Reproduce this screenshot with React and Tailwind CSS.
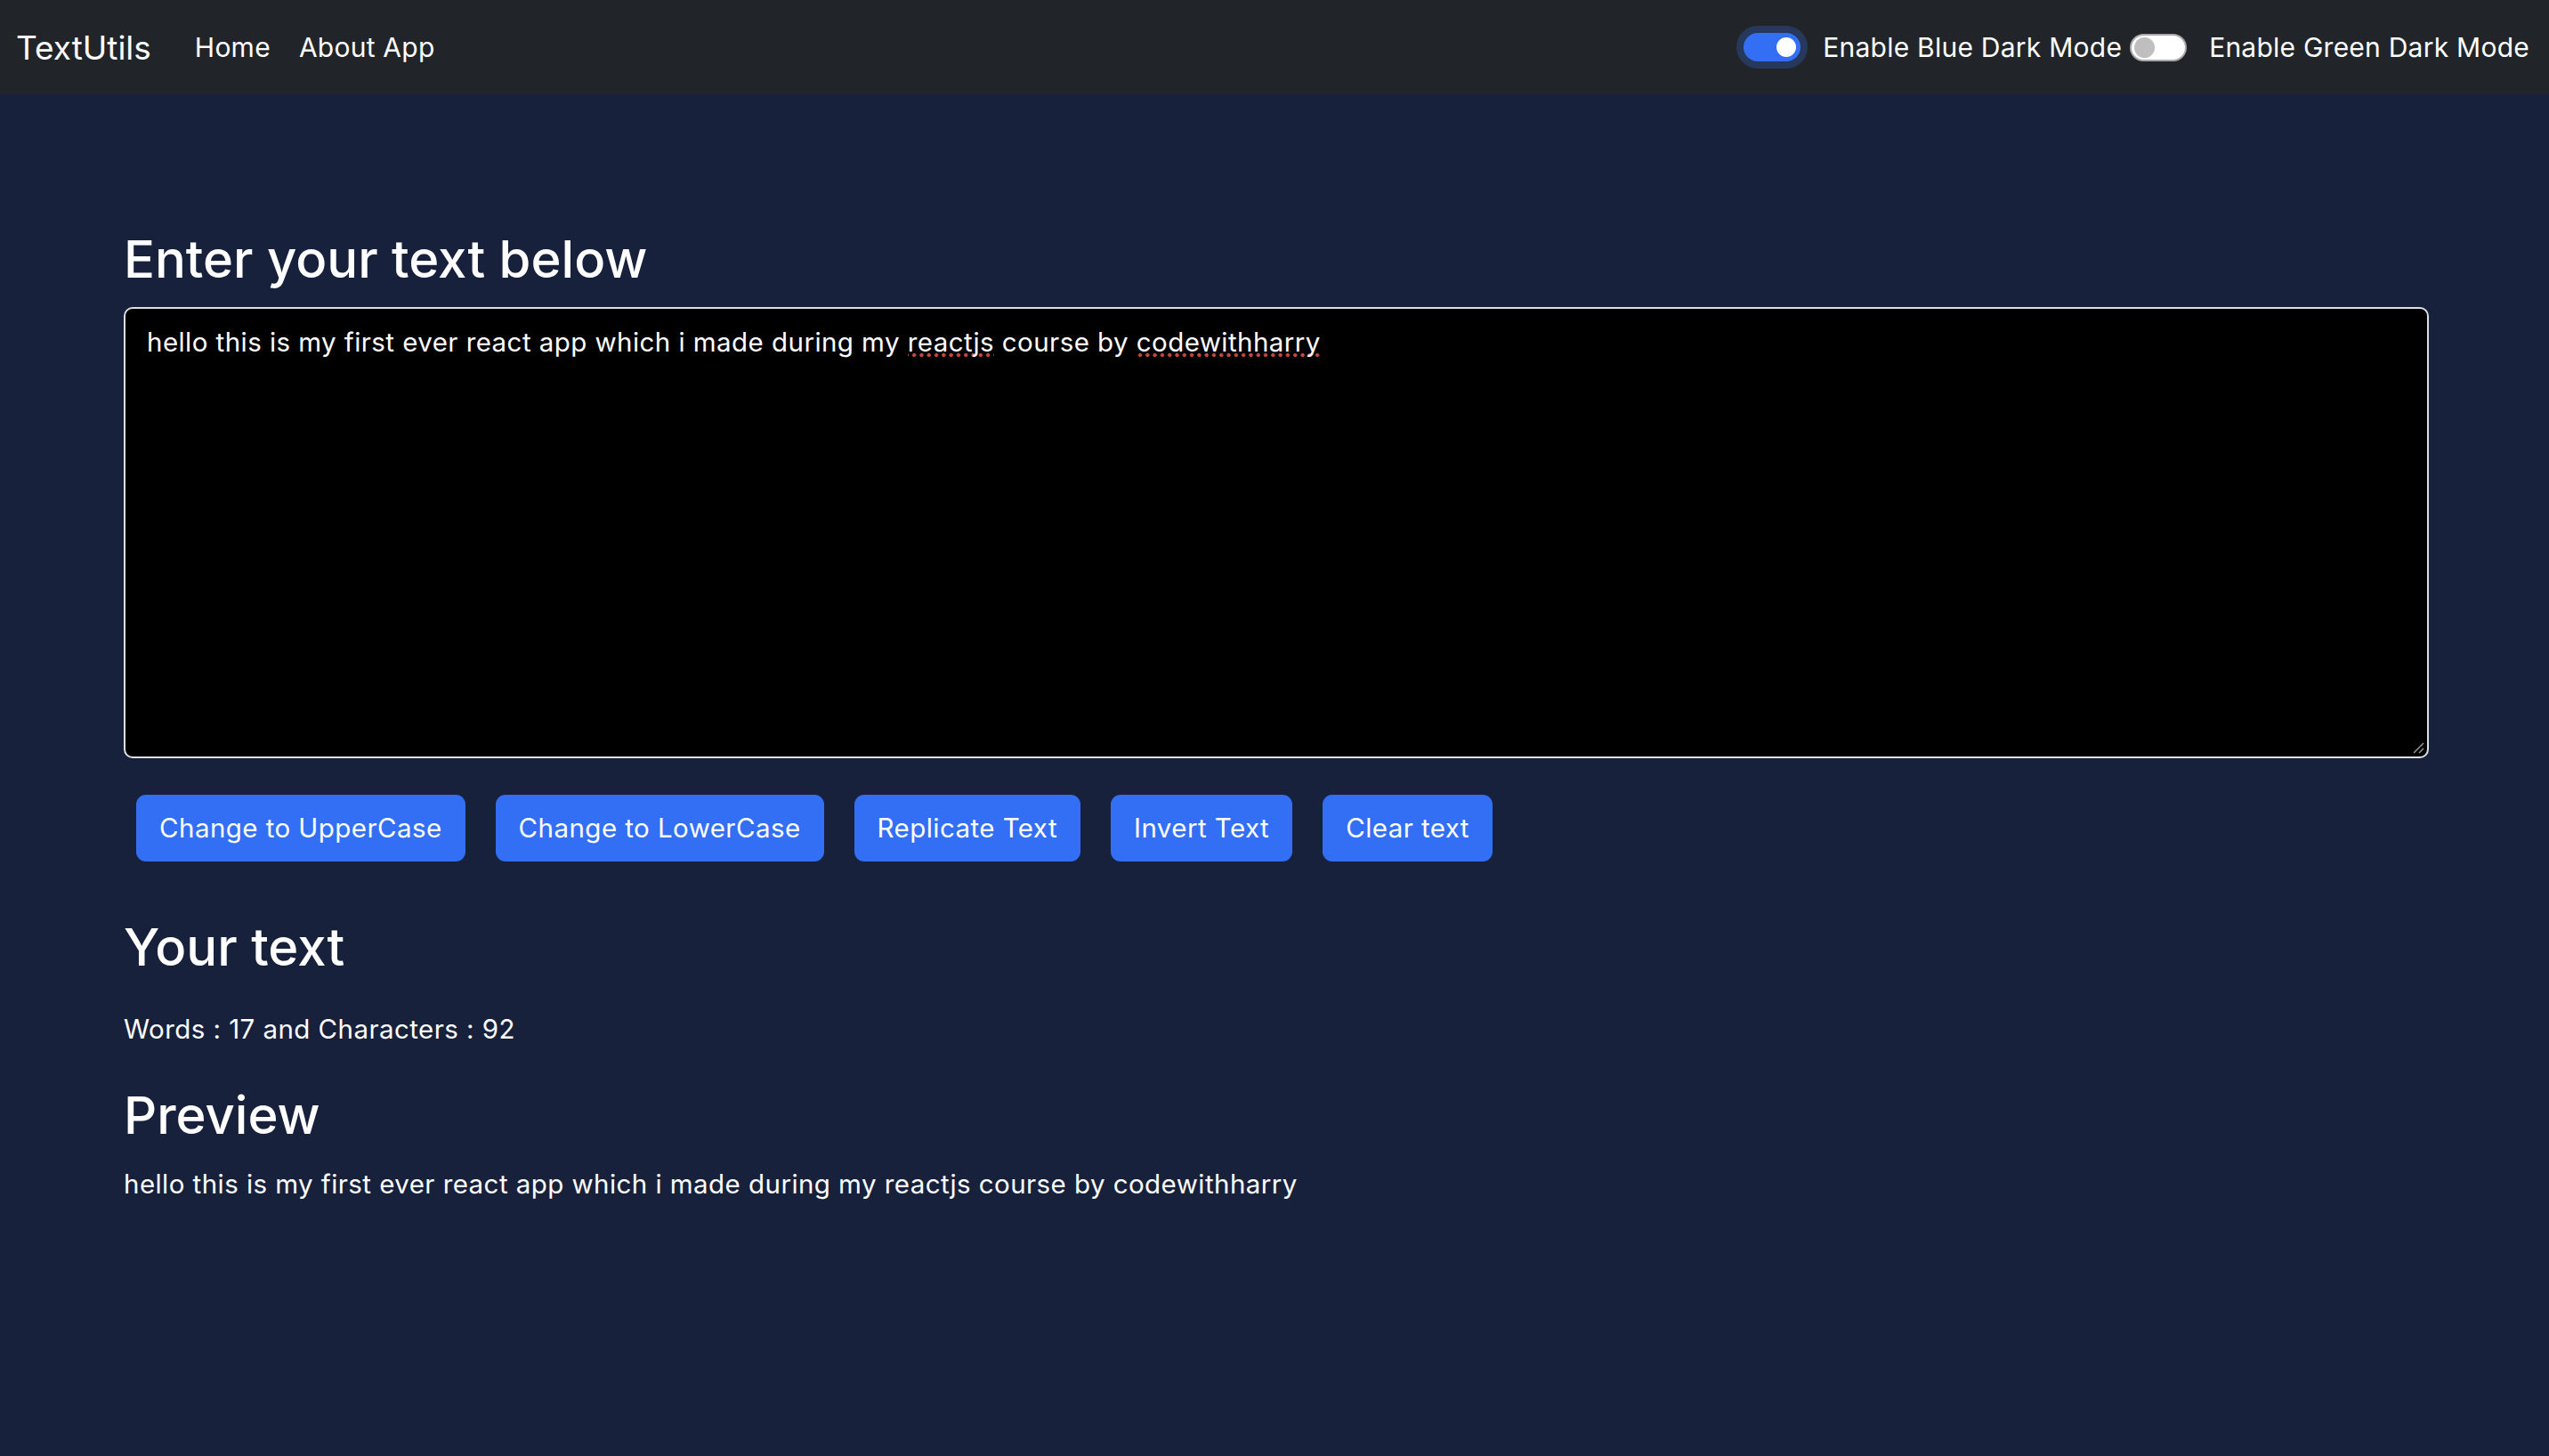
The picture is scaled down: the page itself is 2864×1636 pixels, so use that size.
import React, { useState } from 'react'

const sample = 'hello this is my first ever react app which i made during my reactjs course by codewithharry'

function Switch({ on }) {
  if (on) {
    return (
      <span className="flex items-center justify-end w-[64px] h-[32px] rounded-full bg-[#336ff5] pr-[5px] shadow-[0_0_0_8px_#26395c]">
        <span className="w-[22px] h-[22px] rounded-full bg-white" />
      </span>
    )
  }
  return (
    <span className="flex items-center w-[64px] h-[31px] rounded-full bg-white border-2 border-[#a9a9a9] pl-[3px]">
      <span className="w-[23px] h-[23px] rounded-full bg-[#bfbfbf]" />
    </span>
  )
}

function Squiggle({ children }) {
  return (
    <span className="bg-[image:radial-gradient(circle,#c8473b_1.8px,transparent_2.4px)] bg-[length:8.3px_6px] bg-repeat-x bg-bottom">
      {children}
    </span>
  )
}

export default function App() {
  const [blue] = useState(true)

  return (
    <div className="min-h-screen bg-[#18213b] text-white font-['Inter','Noto_Sans',sans-serif]">
      <nav className="h-[106px] bg-[#212529] flex items-center pl-[18px] pr-[22px] tracking-[0.015em]">
        <span className="text-[37px] leading-none mr-[33px] tracking-normal">TextUtils</span>
        <a className="text-[30px] px-[16px]" href="#">Home</a>
        <a className="text-[30px] px-[16px]" href="#">About App</a>

        <div className="ml-auto flex items-center text-[30px]">
          <Switch on={blue} />
          <span className="ml-[25px]">Enable Blue Dark Mode</span>
          <span className="ml-[9px]"><Switch on={false} /></span>
          <span className="ml-[25px]">Enable Green Dark Mode</span>
        </div>
      </nav>

      <main className="pl-[139px] pr-[135px] pt-[151px] pb-[100px]">
        <h1 className="text-[58px] font-medium leading-[1.2] mb-[18px]">Enter your text below</h1>

        <div className="relative h-[507px] bg-black border-2 border-[#dcdfe3] rounded-[10px] pl-[24px] pt-[16px] text-[29.5px] leading-[43.2px] tracking-[0.015em]">
          hello this is my first ever react app which i made during my <Squiggle>reactjs</Squiggle> course by <Squiggle>codewithharry</Squiggle>
          <svg className="absolute right-[3px] bottom-[3px]" width="14" height="14" viewBox="0 0 14 14">
            <line x1="2" y1="13" x2="13" y2="2" stroke="#9a9a9a" strokeWidth="1.5" />
            <line x1="8" y1="13" x2="13" y2="8" stroke="#9a9a9a" strokeWidth="1.5" />
          </svg>
        </div>

        <div className="flex gap-[34px] pl-[14px] mt-[41px]">
          {['Change to UpperCase', 'Change to LowerCase', 'Replicate Text', 'Invert Text', 'Clear text'].map(label => (
            <button key={label} className="h-[75px] px-[26px] rounded-[11px] bg-[#336ff5] text-[29.5px] tracking-[0.015em] text-white">
              {label}
            </button>
          ))}
        </div>

        <h2 className="text-[58px] font-medium leading-[1.2] mt-[62px]">Your text</h2>
        <p className="text-[29.5px] leading-[43.2px] tracking-[0.015em] mt-[36px]">Words : 17 and Characters : 92</p>

        <h2 className="text-[58px] font-medium leading-[1.2] mt-[41px]">Preview</h2>
        <p className="text-[29.5px] leading-[43.2px] tracking-[0.015em] mt-[20px]">{sample}</p>
      </main>
    </div>
  )
}
